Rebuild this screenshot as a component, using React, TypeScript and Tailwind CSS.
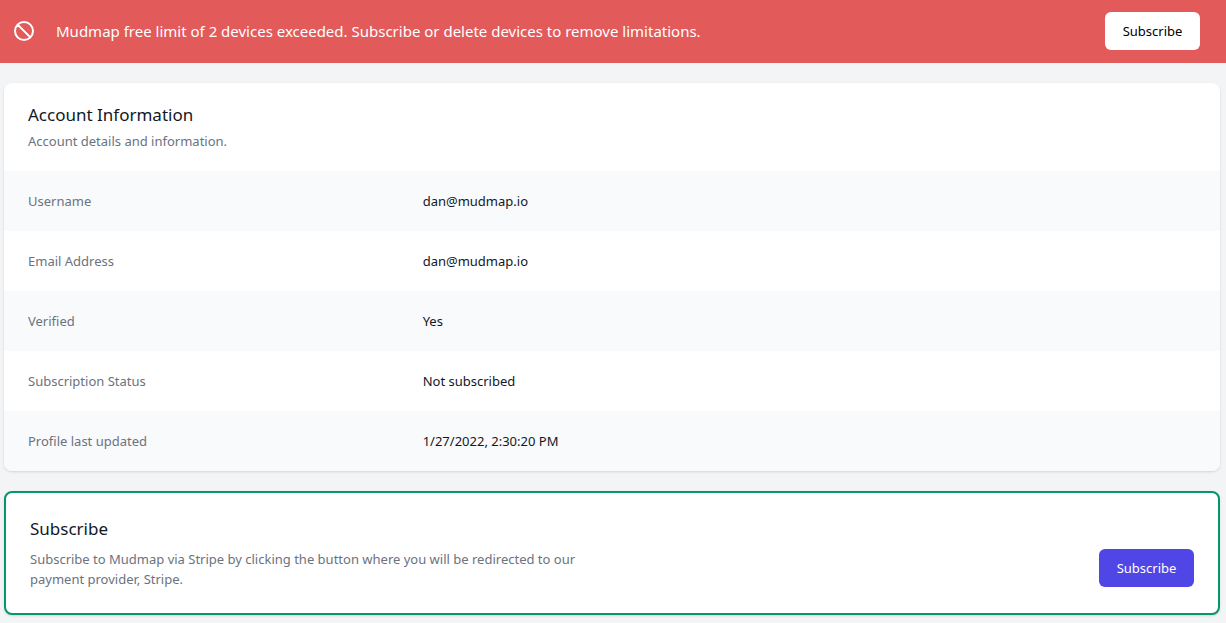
import React from "react";

const details = [
  { label: "Username", value: "dan@mudmap.io" },
  { label: "Email Address", value: "dan@mudmap.io" },
  { label: "Verified", value: "Yes" },
  { label: "Subscription Status", value: "Not subscribed" },
  { label: "Profile last updated", value: "1/27/2022, 2:30:20 PM" },
];

function LimitBanner() {
  return (
    <div className="flex items-center bg-[#e25a5a] pt-3 pr-[26px] pb-[13px] pl-3 text-white">
      <svg
        className="size-6 shrink-0"
        fill="none"
        viewBox="0 0 24 24"
        stroke="currentColor"
        strokeWidth={2}
        aria-hidden="true"
      >
        <path
          strokeLinecap="round"
          strokeLinejoin="round"
          d="M18.364 18.364A9 9 0 005.636 5.636m12.728 12.728A9 9 0 015.636 5.636m12.728 12.728L5.636 5.636"
        />
      </svg>
      <p className="ml-5 flex-1 text-[15px]/6">
        Mudmap free limit of 2 devices exceeded. Subscribe or delete devices to remove limitations.
      </p>
      <button
        type="button"
        className="min-w-[95px] rounded-md border border-transparent bg-white px-4 py-2 text-[13px]/5 text-black"
      >
        Subscribe
      </button>
    </div>
  );
}

function AccountCard() {
  return (
    <section className="overflow-hidden rounded-lg bg-white shadow">
      <div className="px-6 py-5">
        <h3 className="text-[17px]/6 text-[#111827]">Account Information</h3>
        <p className="mt-1 text-[13px]/5 text-[#6b7280]">Account details and information.</p>
      </div>
      <dl>
        {details.map((item) => (
          <div
            key={item.label}
            className="grid grid-cols-3 gap-4 px-6 py-5 text-[13px]/5 odd:bg-[#f9fafb] even:bg-white"
          >
            <dt className="text-[#6b7280]">{item.label}</dt>
            <dd className="col-span-2 text-[#111827]">{item.value}</dd>
          </div>
        ))}
      </dl>
    </section>
  );
}

function SubscribeCard() {
  return (
    <section className="rounded-lg border-2 border-[#059669] bg-white p-6 shadow">
      <h3 className="text-[17px]/6 text-[#111827]">Subscribe</h3>
      <div className="mt-2 flex items-start justify-between">
        <p className="max-w-xl text-[13px]/5 text-[#6b7280]">
          Subscribe to Mudmap via Stripe by clicking the button where you will be redirected to our
          payment provider, Stripe.
        </p>
        <button
          type="button"
          className="min-w-[95px] rounded-md border border-transparent bg-[#4f46e5] px-4 py-2 text-[13px]/5 text-white"
        >
          Subscribe
        </button>
      </div>
    </section>
  );
}

export default function App() {
  return (
    <div className="min-h-screen bg-[#f3f4f6] font-['Noto_Sans',sans-serif]">
      <LimitBanner />
      <main className="flex flex-col gap-5 pt-5 pr-[6px] pb-2 pl-1">
        <AccountCard />
        <SubscribeCard />
      </main>
    </div>
  );
}
